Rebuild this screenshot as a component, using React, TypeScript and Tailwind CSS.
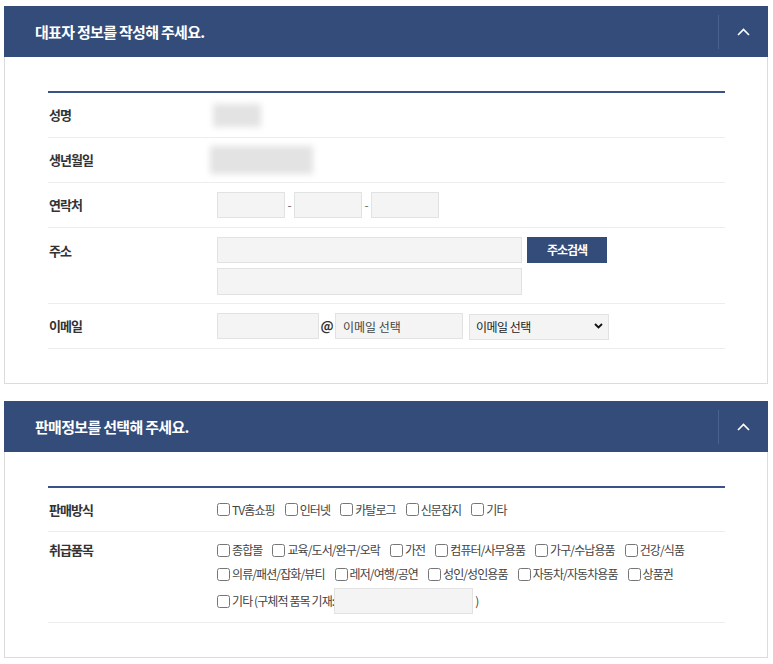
import React from "react";

const FONT = { fontFamily: '"Noto Sans CJK KR", "Noto Sans", sans-serif' };

function Header({ title }: { title: string }) {
  return (
    <div className="h-[51px] bg-[#344c79] flex items-center">
      <h2 className="flex-1 pl-[31px] text-white text-[15px] font-bold tracking-[-0.7px] leading-none">
        {title}
      </h2>
      <div className="h-[34px] w-px bg-[#4a6290]" />
      <button className="w-[49px] h-full flex items-center justify-center">
        <svg width="13" height="8" viewBox="0 0 13 8" fill="none">
          <path d="M1 7 L6.5 1.5 L12 7" stroke="white" strokeWidth="1.6" />
        </svg>
      </button>
    </div>
  );
}

function Row({
  label,
  children,
  className = "h-[45px] items-center",
  labelClass = "",
}: {
  label: string;
  children: React.ReactNode;
  className?: string;
  labelClass?: string;
}) {
  return (
    <div className={`flex border-b border-[#ededed] ${className}`}>
      <div className={`w-[169px] shrink-0 pl-[1px] text-[13px] font-bold text-[#333] tracking-[-1px] ${labelClass}`}>
        {label}
      </div>
      <div className="flex-1 min-w-0">{children}</div>
    </div>
  );
}

const inputCls =
  "h-[26px] bg-[#f4f4f4] border border-[#e2e2e2] outline-none text-[12px] px-[7px] text-[#555]";

function Check({ label }: { label: string }) {
  return (
    <label className="flex items-center text-[12px] text-[#444] tracking-[-0.9px] whitespace-nowrap">
      <input type="checkbox" className="w-[13px] h-[13px] m-0 mr-[2px]" />
      {label}
    </label>
  );
}

export default function App() {
  return (
    <div className="bg-white min-h-[664px] pt-[6px] pl-[4px]" style={FONT}>
      <div className="w-[764px]">
        {/* Panel 1 */}
        <section>
          <Header title="대표자 정보를 작성해 주세요." />
          <div className="border border-t-0 border-[#dcdcdc] pt-[34px] pb-[34px] pl-[43px] pr-[42px]">
            <div className="border-t-2 border-[#3b5284]">
              <Row label="성명">
                <div className="ml-[-4px] w-[48px] h-[23px] bg-[#e3e3e3] blur-[3px]" />
              </Row>
              <Row label="생년월일">
                <div className="ml-[-7px] w-[103px] h-[28px] bg-[#e3e3e3] blur-[3px]" />
              </Row>
              <Row label="연락처">
                <div className="flex items-center">
                  <input className={`${inputCls} w-[68px]`} />
                  <span className="w-[9px] text-center text-[12px] text-[#666]">-</span>
                  <input className={`${inputCls} w-[68px]`} />
                  <span className="w-[9px] text-center text-[12px] text-[#666]">-</span>
                  <input className={`${inputCls} w-[68px]`} />
                </div>
              </Row>
              <Row label="주소" className="h-[76px] pt-[9px]" labelClass="pt-[4px]">
                <div className="flex flex-col gap-[5px]">
                  <div className="flex gap-[5px]">
                    <input className={`${inputCls} w-[305px]`} />
                    <button className="w-[80px] h-[26px] bg-[#344c79] text-white text-[12px] font-bold tracking-[-1px]">
                      주소검색
                    </button>
                  </div>
                  <input className={`${inputCls} w-[305px] h-[27px]`} />
                </div>
              </Row>
              <Row label="이메일">
                <div className="flex items-center">
                  <input className={`${inputCls} w-[102px]`} />
                  <span className="w-[16px] text-center text-[13px] font-bold text-[#333]">@</span>
                  <input
                    className={`${inputCls} w-[128px] placeholder:text-[#444]`}
                    placeholder="이메일 선택"
                  />
                  <div className="relative ml-[6px]">
                    <select className="appearance-none w-[140px] h-[26px] bg-[#f4f4f4] border border-[#e2e2e2] outline-none text-[12px] pl-[6px] text-[#222] tracking-[-0.5px]">
                      <option>이메일 선택</option>
                    </select>
                    <svg
                      className="absolute right-[6px] top-[10px] pointer-events-none"
                      width="9"
                      height="6"
                      viewBox="0 0 9 6"
                      fill="none"
                    >
                      <path d="M1 1 L4.5 4.5 L8 1" stroke="#111" strokeWidth="1.8" />
                    </svg>
                  </div>
                </div>
              </Row>
            </div>
          </div>
        </section>

        {/* Panel 2 */}
        <section className="mt-[17px]">
          <Header title="판매정보를 선택해 주세요." />
          <div className="border border-t-0 border-[#dcdcdc] pt-[34px] pb-[34px] pl-[43px] pr-[42px]">
            <div className="border-t-2 border-[#3b5284]">
              <Row label="판매방식" className="h-[44px] items-center">
                <div className="flex items-center gap-[10px]">
                  <Check label="TV홈쇼핑" />
                  <Check label="인터넷" />
                  <Check label="카탈로그" />
                  <Check label="신문잡지" />
                  <Check label="기타" />
                </div>
              </Row>
              <Row label="취급품목" className="pt-[6px] pb-[6px]" labelClass="h-[24px] flex items-center">
                <div className="flex flex-col">
                  <div className="h-[24px] flex items-center gap-[10px]">
                    <Check label="종합몰" />
                    <Check label="교육/도서/완구/오락" />
                    <Check label="가전" />
                    <Check label="컴퓨터/사무용품" />
                    <Check label="가구/수납용품" />
                    <Check label="건강/식품" />
                  </div>
                  <div className="h-[24px] flex items-center gap-[10px]">
                    <Check label="의류/패션/잡화/뷰티" />
                    <Check label="레저/여행/공연" />
                    <Check label="성인/성인용품" />
                    <Check label="자동차/자동차용품" />
                    <Check label="상품권" />
                  </div>
                  <div className="h-[30px] flex items-center">
                    <Check label="기타 (구체적 품목 기재:" />
                    <input className={`${inputCls} w-[139px]`} />
                    <span className="ml-[2px] text-[12px] text-[#444]">)</span>
                  </div>
                </div>
              </Row>
            </div>
          </div>
        </section>
      </div>
    </div>
  );
}
